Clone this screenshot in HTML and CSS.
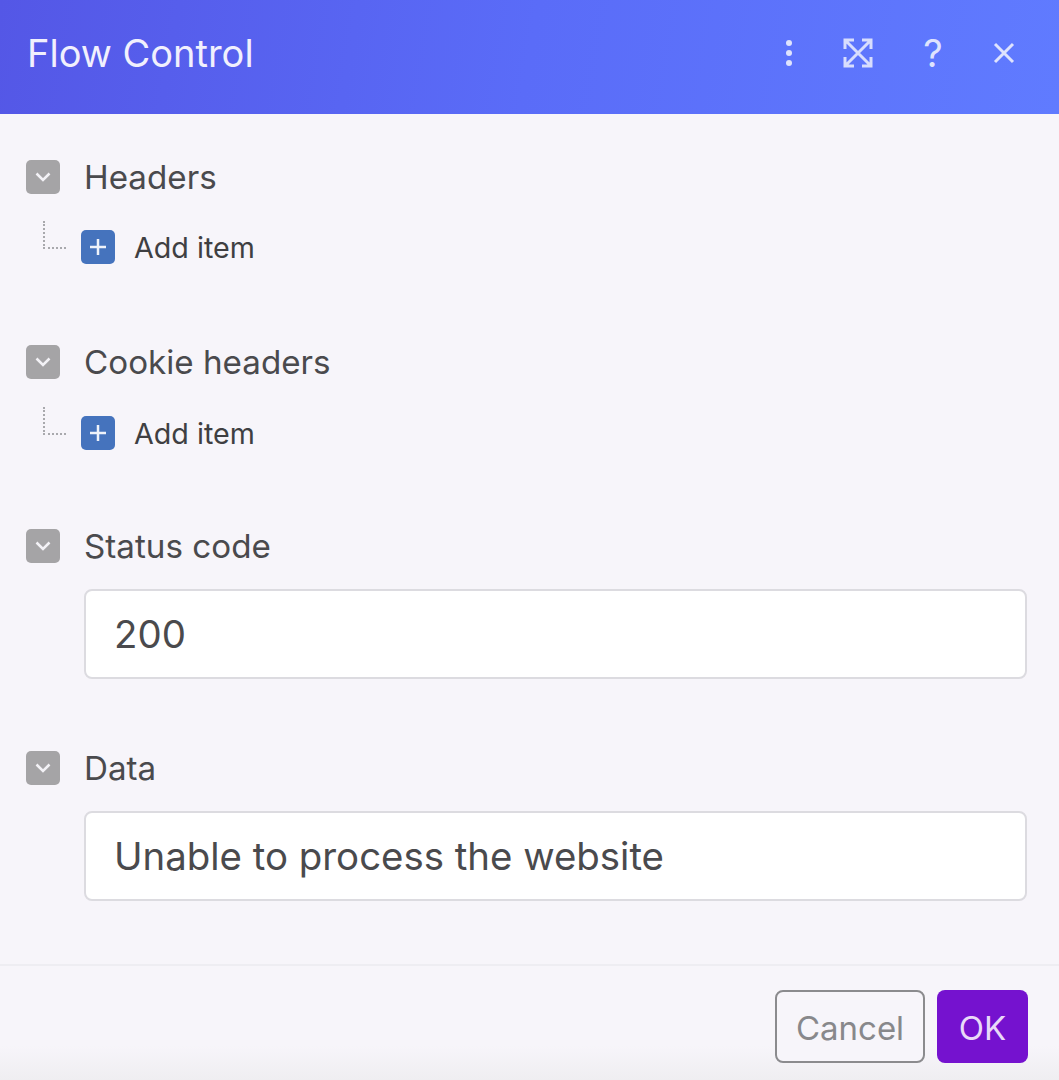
FILE: index.html
```html
<!DOCTYPE html>
<html lang="en">
<head>
    <meta charset="UTF-8">
    <meta name="viewport" content="width=device-width, initial-scale=1.0">
    <title>Flow Control</title>
    <link rel="stylesheet" href="styles.css">
</head>
<body>
    <div class="dialog">
        <div class="header">
            <div class="title">Flow Control</div>
            <div class="header-icons">
                <svg class="icon-dots" width="10" height="32" viewBox="0 0 10 32"><circle cx="5" cy="6" r="3"/><circle cx="5" cy="16" r="3"/><circle cx="5" cy="26" r="3"/></svg>
                <svg class="icon-expand" width="32" height="32" viewBox="0 0 32 32" fill="none"><path d="M3 12V3h9M20 3h9v9M29 20v9h-9M12 29H3v-9M4 4l24 24M28 4L4 28"/></svg>
                <div class="icon-help">?</div>
                <svg class="icon-close" width="24" height="24" viewBox="0 0 24 24" fill="none"><path d="M3 3l18 18M21 3L3 21"/></svg>
            </div>
        </div>

        <div class="content">
            <div class="field field-headers">
                <div class="field-label">
                    <span class="toggle"><svg width="16" height="10" viewBox="0 0 16 10" fill="none"><path d="M1.500 1.500L8 8l6.500-6.500"/></svg></span>
                    <span>Headers</span>
                </div>
                <div class="add-row">
                    <span class="tree-line"></span>
                    <span class="add-btn"><svg width="18" height="18" viewBox="0 0 18 18" fill="none"><path d="M9 1v16M1 9h16"/></svg></span>
                    <span>Add item</span>
                </div>
            </div>

            <div class="field field-cookie">
                <div class="field-label">
                    <span class="toggle"><svg width="16" height="10" viewBox="0 0 16 10" fill="none"><path d="M1.500 1.500L8 8l6.500-6.500"/></svg></span>
                    <span>Cookie headers</span>
                </div>
                <div class="add-row add-row-low">
                    <span class="tree-line"></span>
                    <span class="add-btn"><svg width="18" height="18" viewBox="0 0 18 18" fill="none"><path d="M9 1v16M1 9h16"/></svg></span>
                    <span>Add item</span>
                </div>
            </div>

            <div class="field field-status">
                <div class="field-label">
                    <span class="toggle"><svg width="16" height="10" viewBox="0 0 16 10" fill="none"><path d="M1.500 1.500L8 8l6.500-6.500"/></svg></span>
                    <span>Status code</span>
                </div>
                <div class="text-box">200</div>
            </div>

            <div class="field">
                <div class="field-label">
                    <span class="toggle"><svg width="16" height="10" viewBox="0 0 16 10" fill="none"><path d="M1.500 1.500L8 8l6.500-6.500"/></svg></span>
                    <span>Data</span>
                </div>
                <div class="text-box">Unable to process the website</div>
            </div>
        </div>

        <div class="footer">
            <button class="btn-cancel">Cancel</button>
            <button class="btn-ok">OK</button>
        </div>
    </div>
</body>
</html>
```

FILE: styles.css
```css
body {
    margin: 0;
    font-family: Inter, "Liberation Sans", sans-serif;
    background-color: #f7f5fa;
    color: #4a4a4d;
}
.dialog {
    width: 1059px;
    height: 1080px;
    overflow: hidden;
}
.header {
    height: 114px;
    padding: 0 43px 8px 27px;
    box-sizing: border-box;
    display: flex;
    justify-content: space-between;
    align-items: center;
    background: linear-gradient(100deg, #5457e6 0%, #5a6cf8 50%, #607bff 100%);
    color: #f1f0fd;
}
.title {
    font-size: 38px;
}
.header-icons {
    display: flex;
    align-items: center;
}
.icon-dots {
    fill: #dfe3fd;
    margin-right: 48px;
}
.icon-expand {
    stroke: #d8ddfd;
    stroke-width: 3;
    margin-right: 46px;
}
.icon-help {
    font-size: 38px;
    color: #dfe3fd;
    width: 26px;
    text-align: center;
    margin-right: 46px;
}
.icon-close {
    stroke: #dfe3fd;
    stroke-width: 3;
}
.content {
    padding: 46px 32px 0 26px;
    height: 850px;
    box-sizing: border-box;
}
.field-headers {
    height: 185px;
}
.field-cookie {
    height: 184px;
}
.field-status {
    height: 222px;
}
.field-label {
    display: flex;
    align-items: center;
    gap: 24px;
    height: 34px;
    font-size: 33.2px;
}
.toggle {
    width: 34px;
    height: 34px;
    border-radius: 5px;
    background-color: #a5a4a6;
    display: flex;
    align-items: center;
    justify-content: center;
}
.toggle svg {
    stroke: #f3f2f6;
    stroke-width: 2.5;
}
.add-row {
    display: flex;
    align-items: center;
    margin-top: 36px;
    height: 34px;
    font-size: 28.7px;
    color: #3f3f42;
}
.add-row-low {
    margin-top: 37px;
}
.tree-line {
    width: 23px;
    height: 28px;
    margin: 0 15px 24px 17px;
    border-left: 2px dotted #a9a9ad;
    border-bottom: 2px dotted #a9a9ad;
    box-sizing: border-box;
}
.add-btn {
    width: 34px;
    height: 34px;
    margin-right: 19px;
    border-radius: 5px;
    background-color: #4573bd;
    display: flex;
    align-items: center;
    justify-content: center;
}
.add-btn svg {
    stroke: #eef2fa;
    stroke-width: 2.5;
}
.text-box {
    margin: 26px 0 0 58px;
    height: 90px;
    padding-left: 28px;
    box-sizing: border-box;
    display: flex;
    align-items: center;
    background-color: white;
    border: 2px solid #dcdbe0;
    border-radius: 8px;
    font-size: 38.4px;
}
.footer {
    height: 116px;
    border-top: 2px solid #eeedf2;
    box-sizing: border-box;
    padding: 24px 31px 0 0;
    display: flex;
    justify-content: flex-end;
    gap: 12px;
    background: linear-gradient(180deg, #f7f5fa 70%, #efeef1 100%);
}
.footer button {
    height: 73px;
    padding-top: 3px;
    border-radius: 8px;
    font-family: inherit;
    font-size: 33px;
}
.btn-cancel {
    width: 150px;
    background-color: #f7f5fa;
    border: 2px solid #8b8b8e;
    color: #88888b;
}
.btn-ok {
    width: 91px;
    background-color: #7512cf;
    border: none;
    color: #e9d9f8;
}
```
